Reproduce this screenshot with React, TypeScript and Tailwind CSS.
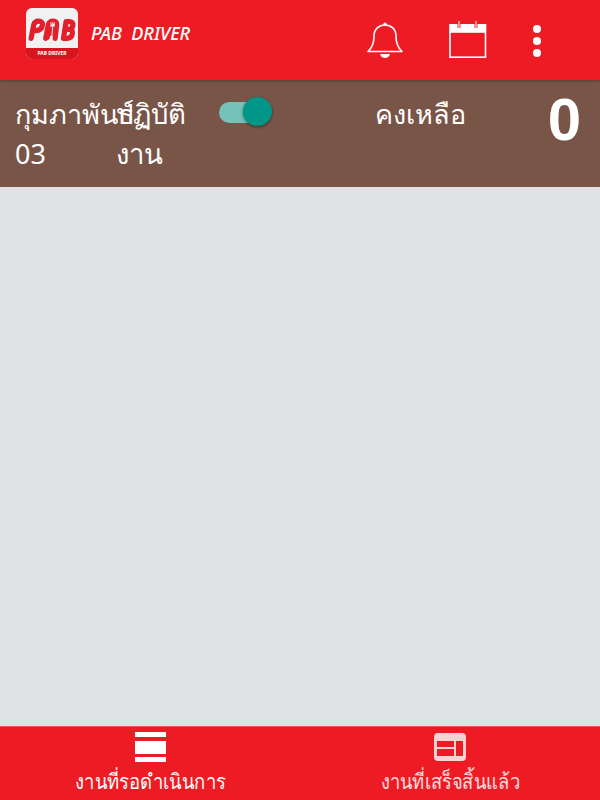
const font = { fontFamily: '"Noto Sans", Roboto, "Noto Sans CJK SC", sans-serif' };

function Logo() {
  return (
    <div className="w-[52px] h-[51px] rounded-[6px] overflow-hidden bg-[#f1f1f1] flex flex-col">
      <div className="flex-1 flex items-center justify-center pt-[4px]">
        <svg width="48" height="24" viewBox="0 0 46 22" fill="none" stroke="#e2202c" strokeWidth="5" strokeLinecap="round" strokeLinejoin="round">
          <path d="M3 19 L5.5 6 Q6.5 2.5 10 2.5 Q14.5 2.5 13.8 6.5 Q13 11.5 7.5 11.5" />
          <path d="M17 19 L19.5 6 Q20.5 2.5 24 2.5 Q28 2.5 27.5 6 L26 19" />
          <path d="M20 10 L25 10 M19 14 L25 14 M18.5 18 L19 10" />
          <path d="M22 3.5 L22 8 M23.6 3.5 L23.6 8 M25.2 3.5 L25.2 8 M23.6 8 L22.8 19" stroke="#f1f1f1" strokeWidth="0.9" strokeLinecap="butt" />
          <path d="M34 19 L36.5 3 H39.5 Q43.5 3 43 6.5 Q42.5 10.5 38 10.5 H39.5 Q43 10.5 42.5 14.5 Q42 19 37 19 Z" />
        </svg>
      </div>
      <div className="h-[11px] bg-[#d5161f] flex items-center justify-center text-white text-[5px] font-bold leading-none">PAB DRIVER</div>
    </div>
  );
}

function BellIcon() {
  return (
    <svg width="36" height="36" viewBox="0 0 36 36" fill="none" stroke="#fff" strokeWidth="1.6">
      <path d="M1 29.5 H35 C30 25 29 20 29 14 C29 7 24 3 18 3 C12 3 7 7 7 14 C7 20 6 25 1 29.5 Z" strokeLinejoin="round" />
      <circle cx="18" cy="2" r="1.6" fill="#fff" stroke="none" />
      <path d="M13 32 H23 C22 35 20 36 18 36 C16 36 14 35 13 32 Z" fill="#fff" stroke="none" />
    </svg>
  );
}

function CalendarIcon() {
  return (
    <svg width="38" height="37" viewBox="0 0 38 37" fill="none">
      <rect x="1" y="3.8" width="35.5" height="32.4" stroke="#fff" strokeWidth="1.6" />
      <rect x="1" y="3.8" width="35.5" height="8" fill="#fff" />
      <path d="M10 0 V7 M27 0 V7" stroke="#ed1c24" strokeWidth="3" />
      <path d="M10 0 V7 M27 0 V7" stroke="#f8c8ca" strokeWidth="1.4" />
    </svg>
  );
}

function ListIcon() {
  return (
    <svg width="31" height="31" viewBox="0 0 31 31" fill="#fff">
      <rect x="0" y="0" width="31" height="5" />
      <rect x="0" y="9" width="31" height="13" />
      <rect x="0" y="25" width="31" height="5" />
    </svg>
  );
}

function PanelIcon() {
  return (
    <svg width="32" height="28" viewBox="0 0 32 28" className="opacity-80">
      <path fillRule="evenodd" fill="#fff" d="M4 0 H28 Q32 0 32 4 V24 Q32 28 28 28 H4 Q0 28 0 24 V4 Q0 0 4 0 Z M3 8 V14 H20 V8 Z M22 8 V23 H29 V8 Z M3 16 V23 H20 V16 Z" />
    </svg>
  );
}

export default function App() {
  return (
    <div className="w-[600px] h-[800px] flex flex-col bg-[#e1e2e4]" style={font}>
      <div className="h-[80px] bg-[#ed1c24] flex items-center pl-[26px] shrink-0 relative z-10 shadow-[0_1px_3px_rgba(0,0,0,0.3)]">
        <div className="-mt-[13px]"><Logo /></div>
        <span className="ml-[13px] -mt-[14px] w-[120px] text-white italic font-medium text-[18px] whitespace-pre">PAB  DRIVER</span>
        <div className="ml-auto flex items-center -mt-[1px]">
          <BellIcon />
          <div className="ml-[46px]"><CalendarIcon /></div>
          <div className="ml-[46px] mr-[59px] flex flex-col gap-[4px] mt-[3px]">
            <span className="w-[8px] h-[8px] rounded-full bg-white" />
            <span className="w-[8px] h-[8px] rounded-full bg-white" />
            <span className="w-[8px] h-[8px] rounded-full bg-white" />
          </div>
        </div>
      </div>

      <div className="h-[107px] bg-[#795548] flex items-start text-white text-[27px] leading-[39px] shrink-0 pl-[15px] pt-[14px]">
        <div className="w-[101px] shrink-0">
          <div className="whitespace-nowrap">กุมภาพันธ์</div>
          <div className="mt-[1px]">03</div>
        </div>
        <div className="w-[76px] shrink-0 text-[27.5px] leading-[40px]">ปฏิบัติงาน</div>
        <div className="relative ml-[27px] mt-[3px] w-[53px] h-[30px] shrink-0 flex items-center">
          <div className="w-[46px] h-[21px] rounded-full bg-[#74c3b8]" />
          <div className="absolute right-0 top-0 w-[29px] h-[29px] rounded-full bg-[#009688] shadow-[0_1px_3px_rgba(0,0,0,0.5)]" />
        </div>
        <div className="ml-[103px] whitespace-nowrap">คงเหลือ</div>
        <div className="ml-auto mr-[19px] -mt-[4px] text-[60px] leading-[60px] font-bold" style={{ fontFamily: '"Liberation Sans", sans-serif' }}>0</div>
      </div>

      <div className="flex-1" />

      <div className="h-[74px] bg-[#ed1c24] border-t border-[#f25056] flex text-white text-[21px] shrink-0">
        <div className="w-1/2 flex flex-col items-center pt-[5px]">
          <ListIcon />
          <span className="leading-[30px] mt-[3px] whitespace-nowrap scale-x-[0.88]">งานที่รอดำเนินการ</span>
        </div>
        <div className="w-1/2 flex flex-col items-center pt-[6px] text-white/85">
          <PanelIcon />
          <span className="leading-[30px] mt-[5px] whitespace-nowrap scale-x-[0.875]">งานที่เสร็จสิ้นแล้ว</span>
        </div>
      </div>
    </div>
  );
}
